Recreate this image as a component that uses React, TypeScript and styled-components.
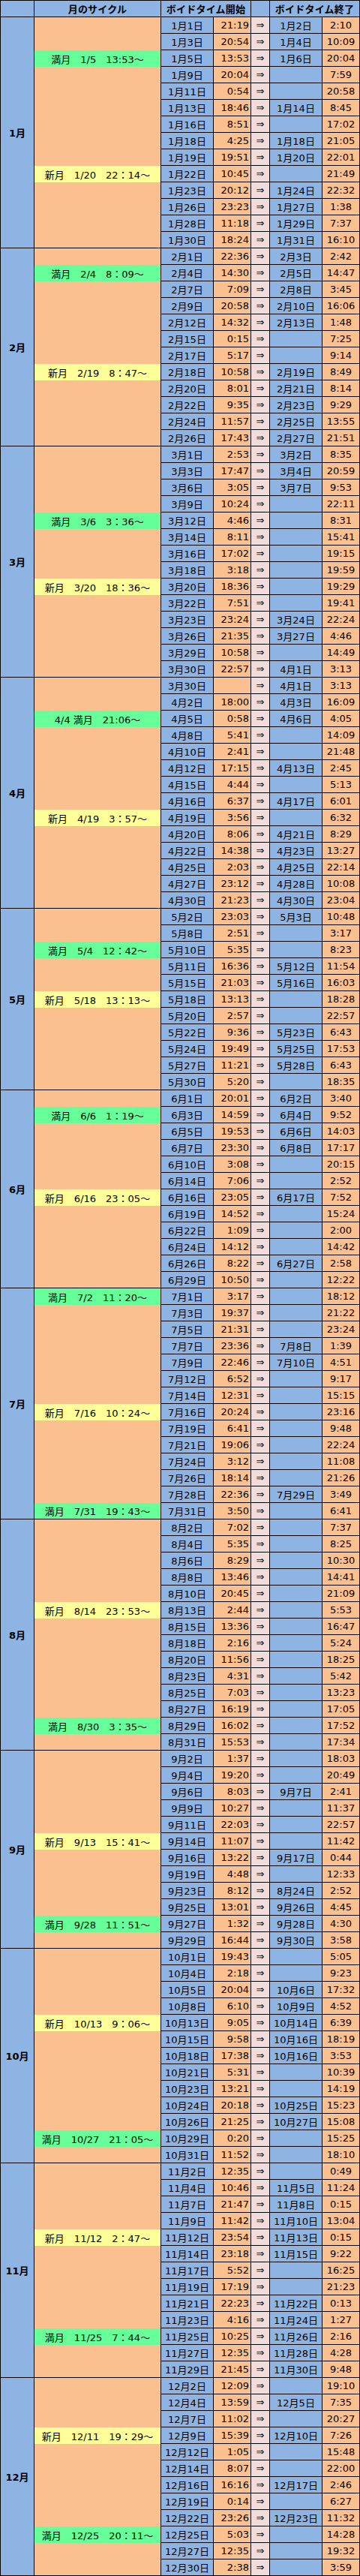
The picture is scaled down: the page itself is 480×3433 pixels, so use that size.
import React from "react";
import styled, { createGlobalStyle } from "styled-components";

const BLUE = "#8db4e2";
const ORANGE = "#fac090";
const GREEN = "#66ff99";
const YELLOW = "#ffff99";
const PINK = "#f2dcdb";
const LINE = "1px solid #000";

const GlobalStyle = createGlobalStyle`
  html, body { margin: 0; padding: 0; background: #fff; }
  body {
    font-family: "DejaVu Sans", "Noto Sans CJK JP", sans-serif;
    font-size: 13px;
    color: #000;
  }
`;

const Sheet = styled.div`
  width: 480px;
  box-sizing: border-box;
  border-top: ${LINE};
  border-left: ${LINE};
`;

const HeaderRow = styled.div`
  display: grid;
  grid-template-columns: 45px 169px 120px 25px 120px;
  height: 22px;
`;

const HeaderCell = styled.div`
  box-sizing: border-box;
  border-right: ${LINE};
  border-bottom: ${LINE};
  background: ${BLUE};
  display: flex;
  align-items: center;
  justify-content: center;
  font-family: "Noto Sans CJK JP", sans-serif;
  font-weight: 700;
  font-size: 13px;
  white-space: nowrap;
  letter-spacing: 0.2px;
`;

const MonthBlock = styled.div`
  display: flex;
`;

const MonthLabel = styled.div`
  box-sizing: border-box;
  width: 45px;
  flex: none;
  border-right: ${LINE};
  border-bottom: ${LINE};
  background: ${BLUE};
  display: flex;
  align-items: center;
  justify-content: center;
  font-weight: 700;
  font-size: 13px;
  white-space: nowrap;
`;

const RowList = styled.div`
  display: flex;
  flex-direction: column;
  width: 434px;
`;

const DataRow = styled.div`
  display: grid;
  grid-template-columns: 169px 70px 50px 25px 70px 50px;
  height: 22px;
`;

type Align = "left" | "center" | "right";

const Cell = styled.div<{ $bg: string; $align: Align }>`
  box-sizing: border-box;
  border-right: ${LINE};
  border-bottom: ${LINE};
  background: ${(p) => p.$bg};
  display: flex;
  align-items: center;
  justify-content: ${(p) =>
    p.$align === "right" ? "flex-end" : p.$align === "left" ? "flex-start" : "center"};
  padding: ${(p) => (p.$align === "right" ? "0 2px 0 0" : "0")};
  white-space: nowrap;
  overflow: hidden;
`;

type MoonKind = "full" | "new" | null;

const MoonCell = styled.div<{ $kind: MoonKind; $last: boolean }>`
  box-sizing: border-box;
  border-right: ${LINE};
  border-bottom: ${(p) => (p.$last ? LINE : "none")};
  background: ${(p) => (p.$kind === "full" ? GREEN : p.$kind === "new" ? YELLOW : ORANGE)};
  display: flex;
  align-items: center;
  justify-content: center;
  white-space: pre;
`;

type Month = {
  m: number;
  rows: string[];
  moons: Record<number, [Exclude<MoonKind, null>, string]>;
};

const MONTHS: Month[] = [
  {
    m: 1,
    rows: [
      "1/1 21:19 1/2 2:10",
      "1/3 20:54 1/4 10:09",
      "1/5 13:53 1/6 20:04",
      "1/9 20:04 - 7:59",
      "1/11 0:54 - 20:58",
      "1/13 18:46 1/14 8:45",
      "1/16 8:51 - 17:02",
      "1/18 4:25 1/18 21:05",
      "1/19 19:51 1/20 22:01",
      "1/22 10:45 - 21:49",
      "1/23 20:12 1/24 22:32",
      "1/26 23:23 1/27 1:38",
      "1/28 11:18 1/29 7:37",
      "1/30 18:24 1/31 16:10",
    ],
    moons: { 2: ["full", "満月　1/5　13:53～"], 9: ["new", "新月　1/20　22：14～"] },
  },
  {
    m: 2,
    rows: [
      "2/1 22:36 2/3 2:42",
      "2/4 14:30 2/5 14:47",
      "2/7 7:09 2/8 3:45",
      "2/9 20:58 2/10 16:06",
      "2/12 14:32 2/13 1:48",
      "2/15 0:15 - 7:25",
      "2/17 5:17 - 9:14",
      "2/18 10:58 2/19 8:49",
      "2/20 8:01 2/21 8:14",
      "2/22 9:35 2/23 9:29",
      "2/24 11:57 2/25 13:55",
      "2/26 17:43 2/27 21:51",
    ],
    moons: { 1: ["full", "満月　2/4　8：09～"], 7: ["new", "新月　2/19　8：47～"] },
  },
  {
    m: 3,
    rows: [
      "3/1 2:53 3/2 8:35",
      "3/3 17:47 3/4 20:59",
      "3/6 3:05 3/7 9:53",
      "3/9 10:24 - 22:11",
      "3/12 4:46 - 8:31",
      "3/14 8:11 - 15:41",
      "3/16 17:02 - 19:15",
      "3/18 3:18 - 19:59",
      "3/20 18:36 - 19:29",
      "3/22 7:51 - 19:41",
      "3/23 23:24 3/24 22:24",
      "3/26 21:35 3/27 4:46",
      "3/29 10:58 - 14:49",
      "3/30 22:57 4/1 3:13",
    ],
    moons: { 4: ["full", "満月　3/6　3：36～"], 8: ["new", "新月　3/20　18：36～"] },
  },
  {
    m: 4,
    rows: [
      "3/30 - 4/1 3:13",
      "4/2 18:00 4/3 16:09",
      "4/5 0:58 4/6 4:05",
      "4/8 5:41 - 14:09",
      "4/10 2:41 - 21:48",
      "4/12 17:15 4/13 2:45",
      "4/15 4:44 - 5:13",
      "4/16 6:37 4/17 6:01",
      "4/19 3:56 - 6:32",
      "4/20 8:06 4/21 8:29",
      "4/22 14:38 4/23 13:27",
      "4/25 2:03 4/25 22:14",
      "4/27 23:12 4/28 10:08",
      "4/30 21:23 4/30 23:04",
    ],
    moons: { 2: ["full", "4/4 満月　21:06～"], 8: ["new", "新月　4/19　3：57～"] },
  },
  {
    m: 5,
    rows: [
      "5/2 23:03 5/3 10:48",
      "5/8 2:51 - 3:17",
      "5/10 5:35 - 8:23",
      "5/11 16:36 5/12 11:54",
      "5/15 21:03 5/16 16:03",
      "5/18 13:13 - 18:28",
      "5/20 2:57 - 22:57",
      "5/22 9:36 5/23 6:43",
      "5/24 19:49 5/25 17:53",
      "5/27 11:21 5/28 6:43",
      "5/30 5:20 - 18:35",
    ],
    moons: { 2: ["full", "満月　5/4　12：42～"], 5: ["new", "新月　5/18　13：13～"] },
  },
  {
    m: 6,
    rows: [
      "6/1 20:01 6/2 3:40",
      "6/3 14:59 6/4 9:52",
      "6/5 19:53 6/6 14:03",
      "6/7 23:30 6/8 17:17",
      "6/10 3:08 - 20:15",
      "6/14 7:06 - 2:52",
      "6/16 23:05 6/17 7:52",
      "6/19 14:52 - 15:24",
      "6/22 1:09 - 2:00",
      "6/24 14:12 - 14:42",
      "6/26 8:22 6/27 2:58",
      "6/29 10:50 - 12:22",
    ],
    moons: { 1: ["full", "満月　6/6　1：19～"], 6: ["new", "新月　6/16　23：05～"] },
  },
  {
    m: 7,
    rows: [
      "7/1 3:17 - 18:12",
      "7/3 19:37 - 21:22",
      "7/5 21:31 - 23:24",
      "7/7 23:36 7/8 1:39",
      "7/9 22:46 7/10 4:51",
      "7/12 6:52 - 9:17",
      "7/14 12:31 - 15:15",
      "7/16 20:24 - 23:16",
      "7/19 6:41 - 9:48",
      "7/21 19:06 - 22:24",
      "7/24 3:12 - 11:08",
      "7/26 18:14 - 21:26",
      "7/28 22:36 7/29 3:49",
      "7/31 3:50 - 6:41",
    ],
    moons: {
      0: ["full", "満月　7/2　11：20～"],
      7: ["new", "新月　7/16　10：24～"],
      13: ["full", "満月　7/31　19：43～"],
    },
  },
  {
    m: 8,
    rows: [
      "8/2 7:02 - 7:37",
      "8/4 5:35 - 8:25",
      "8/6 8:29 - 10:30",
      "8/8 13:46 - 14:41",
      "8/10 20:45 - 21:09",
      "8/13 2:44 - 5:53",
      "8/15 13:36 - 16:47",
      "8/18 2:16 - 5:24",
      "8/20 11:56 - 18:25",
      "8/23 4:31 - 5:42",
      "8/25 7:03 - 13:23",
      "8/27 16:19 - 17:05",
      "8/29 16:02 - 17:52",
      "8/31 15:53 - 17:34",
    ],
    moons: { 5: ["new", "新月　8/14　23：53～"], 12: ["full", "満月　8/30　3：35～"] },
  },
  {
    m: 9,
    rows: [
      "9/2 1:37 - 18:03",
      "9/4 19:20 - 20:49",
      "9/6 8:03 9/7 2:41",
      "9/9 10:27 - 11:37",
      "9/11 22:03 - 22:57",
      "9/14 11:07 - 11:42",
      "9/16 13:22 9/17 0:44",
      "9/19 4:48 - 12:33",
      "9/23 8:12 8/24 2:52",
      "9/25 13:01 9/26 4:45",
      "9/27 1:32 9/28 4:30",
      "9/29 16:44 9/30 3:58",
    ],
    moons: { 5: ["new", "新月　9/13　15：41～"], 10: ["full", "満月　9/28　11：51～"] },
  },
  {
    m: 10,
    rows: [
      "10/1 19:43 - 5:05",
      "10/4 2:18 - 9:23",
      "10/5 20:04 10/6 17:32",
      "10/8 6:10 10/9 4:52",
      "10/13 9:05 10/14 6:39",
      "10/15 9:58 10/16 18:19",
      "10/18 17:38 10/16 3:53",
      "10/21 5:31 - 10:39",
      "10/23 13:21 - 14:19",
      "10/24 20:18 10/25 15:23",
      "10/26 21:25 10/27 15:08",
      "10/29 0:20 - 15:25",
      "10/31 11:52 - 18:10",
    ],
    moons: { 4: ["new", "新月　10/13　9：06～"], 11: ["full", "満月　10/27　21：05～"] },
  },
  {
    m: 11,
    rows: [
      "11/2 12:35 - 0:49",
      "11/4 10:46 11/5 11:24",
      "11/7 21:47 11/8 0:15",
      "11/9 11:42 11/10 13:04",
      "11/12 23:54 11/13 0:15",
      "11/14 23:18 11/15 9:22",
      "11/17 5:52 - 16:25",
      "11/19 17:19 - 21:23",
      "11/21 22:23 11/22 0:13",
      "11/23 4:16 11/24 1:27",
      "11/25 10:25 11/26 2:16",
      "11/27 12:35 11/28 4:28",
      "11/29 21:45 11/30 9:48",
    ],
    moons: { 4: ["new", "新月　11/12　2：47～"], 10: ["full", "満月　11/25　7：44～"] },
  },
  {
    m: 12,
    rows: [
      "12/2 12:09 - 19:10",
      "12/4 13:59 12/5 7:35",
      "12/7 11:02 - 20:27",
      "12/9 15:39 12/10 7:26",
      "12/12 1:05 - 15:48",
      "12/14 8:07 - 22:00",
      "12/16 16:16 12/17 2:46",
      "12/19 0:14 - 6:27",
      "12/22 23:26 12/23 11:32",
      "12/25 5:03 - 14:28",
      "12/27 12:35 - 19:32",
      "12/30 2:38 - 3:59",
    ],
    moons: { 3: ["new", "新月　12/11　19：29～"], 9: ["full", "満月　12/25　20：11～"] },
  },
];

const fmtDate = (s: string) => {
  if (s === "-") return "";
  const [m, d] = s.split("/");
  return `${m}月${d}日`;
};
const fmtTime = (s: string) => (s === "-" ? "" : s);

const MonthSection: React.FC<{ month: Month }> = ({ month }) => (
  <MonthBlock>
    <MonthLabel>{month.m}月</MonthLabel>
    <RowList>
      {month.rows.map((r, i) => {
        const [sd, st, ed, et] = r.split(" ");
        const moon = month.moons[i];
        return (
          <DataRow key={i}>
            <MoonCell $kind={moon ? moon[0] : null} $last={i === month.rows.length - 1}>
              {moon ? moon[1] : ""}
            </MoonCell>
            <Cell $bg={BLUE} $align="center">{fmtDate(sd)}</Cell>
            <Cell $bg={ORANGE} $align="right">{fmtTime(st)}</Cell>
            <Cell $bg={PINK} $align="center">⇒</Cell>
            <Cell $bg={BLUE} $align="center">{fmtDate(ed)}</Cell>
            <Cell $bg={ORANGE} $align="center">{fmtTime(et)}</Cell>
          </DataRow>
        );
      })}
    </RowList>
  </MonthBlock>
);

export default function App() {
  return (
    <>
      <GlobalStyle />
      <Sheet>
        <HeaderRow>
          <HeaderCell />
          <HeaderCell>月のサイクル</HeaderCell>
          <HeaderCell>ボイドタイム開始</HeaderCell>
          <HeaderCell />
          <HeaderCell>ボイドタイム終了</HeaderCell>
        </HeaderRow>
        {MONTHS.map((m) => (
          <MonthSection key={m.m} month={m} />
        ))}
      </Sheet>
    </>
  );
}
